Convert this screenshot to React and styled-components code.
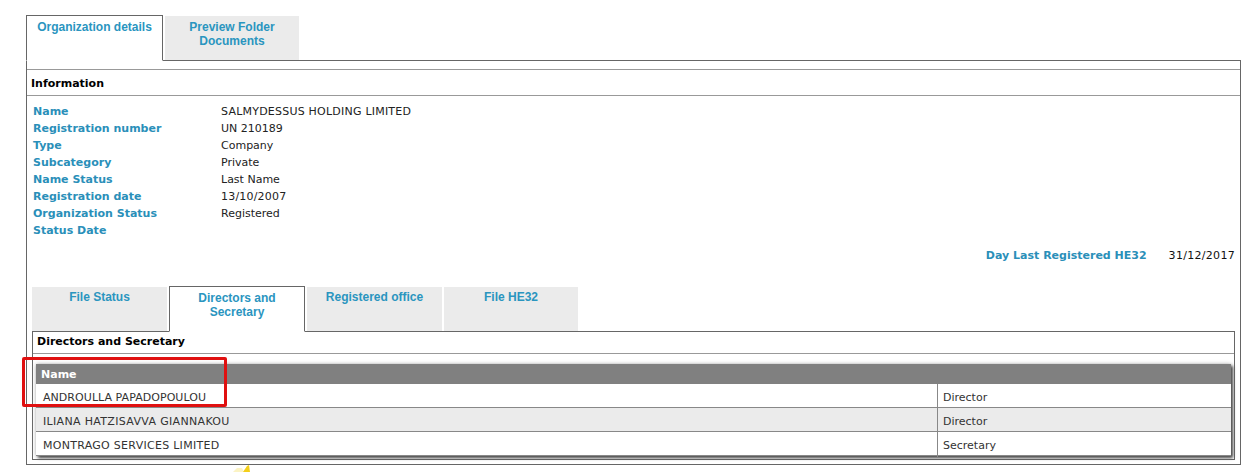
import React from "react";
import styled, { createGlobalStyle } from "styled-components";

const GlobalStyle = createGlobalStyle`
  html, body {
    margin: 0;
    padding: 0;
    background: #fff;
  }
  body {
    font-family: "DejaVu Sans", Verdana, sans-serif;
    font-size: 11px;
    color: #222;
  }
`;

const details = [
  ["Name", "SALMYDESSUS HOLDING LIMITED", 0.22],
  ["Registration number", "UN 210189"],
  ["Type", "Company"],
  ["Subcategory", "Private"],
  ["Name Status", "Last Name"],
  ["Registration date", "13/10/2007", 0.2],
  ["Organization Status", "Registered"],
  ["Status Date", ""],
];

const people = [
  ["ANDROULLA PAPADOPOULOU", "Director", 0.05],
  ["ILIANA HATZISAVVA GIANNAKOU", "Director", 0.33],
  ["MONTRAGO SERVICES LIMITED", "Secretary", 0.28],
];

const innerTabs = [
  { label: "File Status", width: 135 },
  { label: "Directors and Secretary", width: 136, active: true },
  { label: "Registered office", width: 135 },
  { label: "File HE32", width: 134 },
];

export default function App() {
  return (
    <Page>
      <GlobalStyle />
      <TabBar>
        <Tab $active $width={137}>Organization details</Tab>
        <OuterTab $width={134}>Preview Folder Documents</OuterTab>
      </TabBar>
      <OuterPanel>
        <SectionTitle>Information</SectionTitle>
        <DetailList>
          {details.map(([label, value, tracking]) => (
            <DetailRow key={label}>
              <Label>{label}</Label>
              <Value $tracking={tracking}>{value}</Value>
            </DetailRow>
          ))}
        </DetailList>
        <LastRegistered>
          <Label as="span">Day Last Registered HE32</Label>
          <DateValue>31/12/2017</DateValue>
        </LastRegistered>
        <InnerTabBar>
          {innerTabs.map((tab) => (
            <Tab key={tab.label} $active={tab.active} $width={tab.width}>
              {tab.label}
            </Tab>
          ))}
        </InnerTabBar>
        <InnerPanel>
          <InnerTitle>Directors and Secretary</InnerTitle>
          <Table>
            <HeadRow>Name</HeadRow>
            {people.map(([name, role, tracking], i) => (
              <PersonRow key={name} $odd={i % 2 === 1}>
                <NameCell $tracking={tracking}>{name}</NameCell>
                <RoleCell>{role}</RoleCell>
              </PersonRow>
            ))}
          </Table>
        </InnerPanel>
      </OuterPanel>
      <Highlight />
      <Star viewBox="0 0 20 7">
        <path d="M1 7 L5 3 L10 3 L12 7 Z" fill="#fbf3c4" />
        <path d="M15 1 L17 0 L18 7 L11 7 Z" fill="#f4cf1a" />
      </Star>
    </Page>
  );
}

const Page = styled.div`
  position: relative;
  width: 1248px;
  height: 472px;
  overflow: hidden;
  box-sizing: border-box;
  padding: 15px 7px 0 26px;
`;

const TabBar = styled.div`
  display: flex;
  gap: 2px;
  height: 46px;
  position: relative;
  z-index: 1;
`;

const Tab = styled.div`
  box-sizing: border-box;
  width: ${(p) => p.$width}px;
  height: ${(p) => (p.$active ? "46px" : "44px")};
  margin-top: ${(p) => (p.$active ? "0" : "1px")};
  padding: ${(p) => (p.$active ? "4px 8px 0" : "3px 8px 0")};
  background: ${(p) => (p.$active ? "#fff" : "#ebebeb")};
  border: ${(p) => (p.$active ? "1px solid #666" : "none")};
  border-bottom: ${(p) => (p.$active ? "1px solid #fff" : "none")};
  color: #2a95bf;
  font: bold 12px/14px "Liberation Sans", Arial, sans-serif;
  text-align: center;
`;

const OuterTab = styled(Tab)`
  padding-top: 4px;
`;

const OuterPanel = styled.div`
  box-sizing: border-box;
  height: 405px;
  margin-top: -1px;
  border: 1px solid #666;
  padding-top: 8px;
`;

const SectionTitle = styled.div`
  height: 27px;
  box-sizing: border-box;
  padding: 7px 0 0 4px;
  border-top: 1px solid #999;
  border-bottom: 1px solid #999;
  color: #000;
  font-weight: bold;
  line-height: 14px;
`;

const DetailList = styled.div`
  padding: 7px 0 0 6px;
`;

const DetailRow = styled.div`
  display: grid;
  grid-template-columns: 188px 1fr;
  height: 17px;
  line-height: 17px;
`;

const Label = styled.div`
  color: #2a8fb9;
  font-weight: bold;
`;

const Value = styled.span`
  letter-spacing: ${(p) => p.$tracking || 0}px;
`;

const LastRegistered = styled.div`
  display: flex;
  justify-content: flex-end;
  align-items: baseline;
  gap: 22px;
  height: 17px;
  line-height: 17px;
  margin-top: 8px;
  padding-right: 5px;
`;

const DateValue = styled.span`
  color: #111;
  letter-spacing: 0.3px;
`;

const InnerTabBar = styled.div`
  display: flex;
  gap: 2px;
  height: 46px;
  margin: 22px 0 0 5px;
  position: relative;
  z-index: 1;
`;

const InnerPanel = styled.div`
  box-sizing: border-box;
  height: 129px;
  margin: -1px 5px 0 5px;
  border: 1px solid #666;
`;

const InnerTitle = styled.div`
  box-sizing: border-box;
  height: 22px;
  padding: 3px 0 0 4px;
  border-bottom: 1px solid #999;
  color: #000;
  font-weight: bold;
  line-height: 14px;
`;

const Table = styled.div`
  margin: 10px 3px 0;
  box-shadow: 2px 2px 3px #444, 0 0 4px #bbb;
`;

const HeadRow = styled.div`
  box-sizing: border-box;
  height: 20px;
  padding: 4px 0 0 5px;
  background: #808080;
  color: #fff;
  font-weight: bold;
  line-height: 14px;
`;

const PersonRow = styled.div`
  display: grid;
  grid-template-columns: 901px 1fr;
  height: 24px;
  box-sizing: border-box;
  border-bottom: 1px solid #888;
  background: ${(p) => (p.$odd ? "#ebebeb" : "#fff")};
  line-height: 23px;
  color: #333;
`;

const NameCell = styled.div`
  padding: 2px 0 0 7px;
  letter-spacing: ${(p) => p.$tracking || 0}px;
`;

const RoleCell = styled.div`
  padding: 2px 0 0 5px;
  border-left: 1px solid #888;
`;

const Highlight = styled.div`
  position: absolute;
  left: 22px;
  top: 357px;
  width: 205px;
  height: 50px;
  box-sizing: border-box;
  border: 3px solid #e01010;
  border-radius: 2px;
`;

const Star = styled.svg`
  position: absolute;
  left: 232px;
  top: 465px;
  width: 20px;
  height: 7px;
`;
